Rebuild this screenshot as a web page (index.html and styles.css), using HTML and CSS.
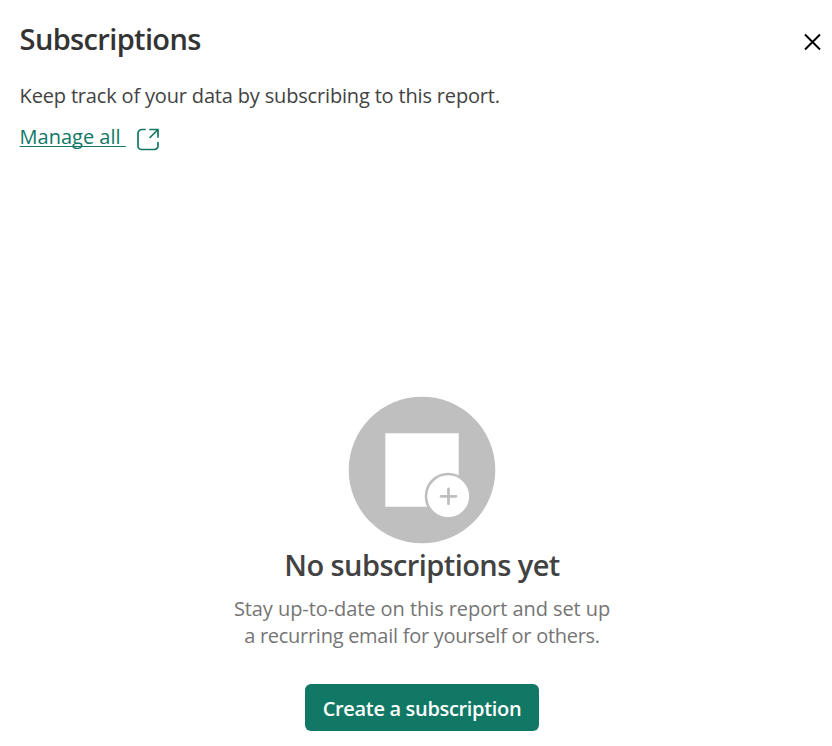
FILE: index.html
```html
<!DOCTYPE html>
<html lang="en">
<head>
<meta charset="utf-8">
<title>Subscriptions</title>
<link rel="stylesheet" href="styles.css">
</head>
<body>
<aside class="panel">
  <header class="header">
    <h1 class="title">Subscriptions</h1>
    <button class="close" aria-label="Close"><svg width="18" height="18" viewBox="0 0 18 18"><path d="M2 1.500l15 15M17 1.500l-15 15"/></svg></button>
  </header>
  <p class="intro">Keep track of your data by subscribing to this report.</p>
  <a class="manage" href="#"><span class="manage-label">Manage all&nbsp;</span>
    <svg class="external" width="24" height="24" viewBox="0 0 24 24"><path d="M9 2.500H6a4 4 0 0 0-4 4V19a3.500 3.500 0 0 0 3.500 3.500h13A3.500 3.500 0 0 0 22 19v-3.500M14 2.500h8V10M22 2.500l-8 8"/></svg></a>
  <main class="empty">
    <svg class="art" width="148" height="148" viewBox="0 0 148 148"><circle cx="74" cy="74" r="73.300" fill="#bfbfbf"/><path d="M37.300 37.300h73.400v73.400H37.300z" fill="#fff"/><circle cx="100.200" cy="100.200" r="22.200" fill="#fff" stroke="#bfbfbf" stroke-width="2.600"/><path d="M93 100.300h15M100.500 92.800v15" stroke="#bfbfbf" stroke-width="2.800" stroke-linecap="round"/></svg>
    <h2 class="empty-title">No subscriptions yet</h2>
    <p class="description"><span class="first-line">Stay up-to-date on this report and set up</span><br><span class="second-line">a recurring email for yourself or others.</span></p>
    <button class="create">Create a subscription</button>
  </main>
</aside>
</body>
</html>
```
FILE: styles.css
```css
* { box-sizing: border-box; }
body { margin: 0; background: #fff; color: #333; font-family: "Segoe UI", "Open Sans", "Noto Sans", sans-serif; }
h1, h2, p { margin: 0; }
button { border: 0; padding: 0; font-family: inherit; white-space: nowrap; }
svg { display: block; }
.panel { height: 746px; padding: 19px 11px 0 19px; white-space: nowrap; }
.header { display: flex; height: 62px; justify-content: space-between; align-items: flex-start; }
.title, .empty-title { font-size: 29px; line-height: 40px; font-weight: 600; }
.title { letter-spacing: -0.640px; }
.close { margin-top: 14px; background: transparent; }
.close path { fill: none; stroke: #000; stroke-width: 2; }
.intro { height: 41px; line-height: 30px; font-size: 20px; letter-spacing: -0.170px; color: #424242; }
.manage { display: flex; height: 30px; color: #117865; font-size: 20px; line-height: 30px; text-decoration: none; }
.manage-label { width: 107px; flex: none; text-decoration: underline; text-decoration-thickness: 1px; text-underline-offset: 2px; text-decoration-skip-ink: none; }
.external { margin: 5px 0 0 10px; flex: none; fill: none; stroke: currentColor; stroke-width: 1.700; stroke-linecap: round; stroke-linejoin: round; }
.empty { display: flex; flex-direction: column; align-items: center; width: 806px; padding-top: 244px; }
.title, .intro, .manage-label { text-indent: 0.600px; }
.empty-title { margin-top: 1px; letter-spacing: -0.570px; color: #424242; }
.description { margin-top: 10px; text-align: center; font-size: 20px; line-height: 27px; color: #757575; }
.first-line { letter-spacing: -0.070px; }
.second-line { letter-spacing: -0.270px; }
.create { width: 234px; height: 47px; margin-top: 35px; padding-top: 2px; border-radius: 6px; background: #117865; color: #fff; font-size: 20px; font-weight: 600; letter-spacing: -0.330px; }
```
